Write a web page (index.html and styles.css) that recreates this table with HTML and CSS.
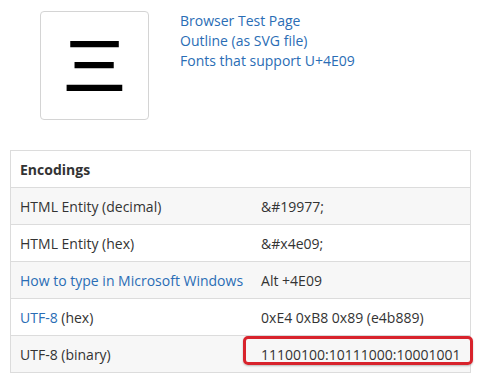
FILE: index.html
```html
<!DOCTYPE html>
<html>
<head>
<meta charset="utf-8">
<link rel="stylesheet" href="styles.css">
</head>
<body>
<div class="top">
  <div class="glyph-box"><span class="glyph">三</span></div>
  <div class="links">
    <a href="#">Browser Test Page</a>
    <a href="#">Outline (as SVG file)</a>
    <a href="#">Fonts that support U+4E09</a>
  </div>
</div>
<div class="table-wrap">
  <table class="enc">
    <thead>
      <tr><th colspan="2">Encodings</th></tr>
    </thead>
    <tbody>
      <tr class="odd"><td class="k">HTML Entity (decimal)</td><td>&amp;#19977;</td></tr>
      <tr><td class="k">HTML Entity (hex)</td><td>&amp;#x4e09;</td></tr>
      <tr class="odd"><td class="k"><a href="#">How to type in Microsoft Windows</a></td><td>Alt +4E09</td></tr>
      <tr><td class="k"><a href="#">UTF-8</a> (hex)</td><td>0xE4 0xB8 0x89 (e4b889)</td></tr>
      <tr class="odd"><td class="k">UTF-8 (binary)</td><td>11100100:10111000:10001001</td></tr>
    </tbody>
  </table>
  <div class="highlight"></div>
</div>
</body>
</html>
```

FILE: styles.css
```css
html, body {
  margin: 0;
  padding: 0;
  background: #fff;
}
body {
  font-family: "Open Sans", "Noto Sans", sans-serif;
  font-size: 14px;
  color: #333;
}
a {
  color: #2a6db5;
  text-decoration: none;
}
.top {
  display: flex;
  align-items: flex-start;
  padding: 11px 0 0 40px;
  gap: 31px;
}
.glyph-box {
  width: 107px;
  height: 107px;
  border: 1px solid #d4d4d4;
  border-radius: 4px;
  display: flex;
  align-items: center;
  justify-content: center;
}
.glyph {
  font-family: "Noto Sans CJK SC", sans-serif;
  font-size: 64px;
  font-weight: 500;
  line-height: 1;
  color: #000;
  margin-top: -9px;
}
.links {
  display: flex;
  flex-direction: column;
  line-height: 20px;
}
.table-wrap {
  position: relative;
  margin: 30px 0 0 10px;
  width: 458px;
}
.enc {
  border-collapse: collapse;
  width: 458px;
  border: 1px solid #dcdcdc;
}
.enc th {
  text-align: left;
  font-weight: 700;
  height: 36px;
  padding: 0 9px;
  border-bottom: 1px solid #dcdcdc;
}
.enc td {
  height: 36px;
  padding: 0 9px;
  border-top: 1px solid #dcdcdc;
  white-space: nowrap;
}
.enc td.k {
  width: 222px;
}
.enc tr.odd td {
  background: #f7f7f7;
}
.highlight {
  position: absolute;
  left: 233px;
  top: 186px;
  width: 224px;
  height: 23px;
  border: 3px solid #d8232c;
  border-radius: 5px;
  box-shadow: 0 1px 2px rgba(0,0,0,0.25);
}
```
